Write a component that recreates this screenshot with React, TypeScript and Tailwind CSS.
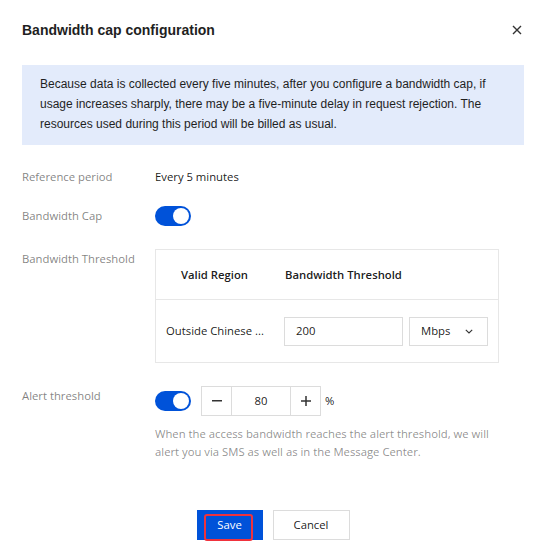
import React from "react";

const sans = { fontFamily: '"Open Sans", "Noto Sans", sans-serif' };
const arial = { fontFamily: '"Liberation Sans", Arial, sans-serif' };

function Toggle() {
  return (
    <div className="flex h-[20px] w-[36px] items-center justify-end rounded-full bg-[#0052d9] px-[2px]">
      <div className="h-[16px] w-[16px] rounded-full bg-white" />
    </div>
  );
}

export default function App() {
  return (
    <div className="h-[559px] w-[546px] bg-white text-[11.3px] text-[rgba(0,0,0,0.9)]" style={sans}>
      <div className="flex items-center justify-between pl-[22px] pr-[24px] pt-[20px]">
        <h1 className="text-[14px] font-bold leading-[20px] text-[#1f1f1f]" style={arial}>
          Bandwidth cap configuration
        </h1>
        <svg width="10" height="10" viewBox="0 0 10 10" className="text-[#333]">
          <path d="M1 1 L9 9 M9 1 L1 9" stroke="currentColor" strokeWidth="1.4" />
        </svg>
      </div>

      <div
        className="mx-[22px] mt-[25px] bg-[#e3ebfb] pb-[11px] pl-[18px] pr-[16px] pt-[9px] text-[12px] leading-[20px] text-[#1f1f1f]"
        style={arial}
      >
        Because data is collected every five minutes, after you configure a bandwidth cap, if usage increases sharply, there may be a five-minute delay in request rejection. The resources used during this period will be billed as usual.
      </div>

      <div className="px-[22px] pt-[22px]">
        <div className="flex leading-[20px]">
          <div className="w-[133px] text-[rgba(0,0,0,0.5)]">Reference period</div>
          <div>Every 5 minutes</div>
        </div>

        <div className="mt-[19px] flex leading-[20px]">
          <div className="w-[133px] text-[rgba(0,0,0,0.5)]">Bandwidth Cap</div>
          <Toggle />
        </div>

        <div className="mt-[23px] flex leading-[20px]">
          <div className="w-[133px] text-[rgba(0,0,0,0.5)]">Bandwidth Threshold</div>
          <div className="w-[344px] border border-[#e7e7e7]">
            <div className="flex h-[50px] items-center border-b border-[#e7e7e7] font-semibold">
              <div className="w-[117px] text-center">Valid Region</div>
              <div className="pl-[12px]">Bandwidth Threshold</div>
            </div>
            <div className="flex h-[62px] items-center">
              <div className="w-[117px] whitespace-nowrap pl-[10px]">Outside Chinese ...</div>
              <div className="flex items-center pl-[11px]">
                <div className="flex h-[29px] w-[119px] items-center border border-[#dcdcdc] pl-[11px]">200</div>
                <div className="ml-[6px] flex h-[29px] w-[79px] items-center justify-between border border-[#dcdcdc] pl-[11px] pr-[14px]">
                  <span>Mbps</span>
                  <svg width="8" height="5" viewBox="0 0 8 5">
                    <path d="M0.8 0.8 L4 4 L7.2 0.8" fill="none" stroke="#333" strokeWidth="1.1" />
                  </svg>
                </div>
              </div>
            </div>
          </div>
        </div>

        <div className="mt-[23px] flex leading-[20px]">
          <div className="w-[133px] text-[rgba(0,0,0,0.5)]">Alert threshold</div>
          <div>
            <div className="flex items-center">
              <Toggle />
              <div className="ml-[10px] flex h-[30px] w-[120px] border border-[#dcdcdc]">
                <div className="flex w-[30px] items-center justify-center border-r border-[#dcdcdc]">
                  <svg width="10" height="2" viewBox="0 0 10 2"><rect width="10" height="1.5" fill="#333" /></svg>
                </div>
                <div className="flex flex-1 items-center justify-center">80</div>
                <div className="flex w-[30px] items-center justify-center border-l border-[#dcdcdc]">
                  <svg width="10" height="10" viewBox="0 0 10 10"><path d="M0 5 H10 M5 0 V10" stroke="#333" strokeWidth="1.5" /></svg>
                </div>
              </div>
              <span className="ml-[4px]">%</span>
            </div>
            <div className="mt-[9px] w-[345px] leading-[18px] text-[rgba(0,0,0,0.45)]">
              When the access bandwidth reaches the alert threshold, we will alert you via SMS as well as in the Message Center.
            </div>
          </div>
        </div>
      </div>

      <div className="mt-[49px] flex justify-center gap-[10px]">
        <div className="relative flex h-[30px] w-[66px] items-center justify-center bg-[#0052d9] text-white">
          Save
          <div className="absolute left-[7px] top-[4px] h-[27px] w-[49px] rounded-[3px] border-[2.5px] border-[#f0323c]" />
        </div>
        <div className="flex h-[30px] w-[77px] items-center justify-center border border-[#dcdcdc] text-[rgba(0,0,0,0.9)]">
          Cancel
        </div>
      </div>
    </div>
  );
}
